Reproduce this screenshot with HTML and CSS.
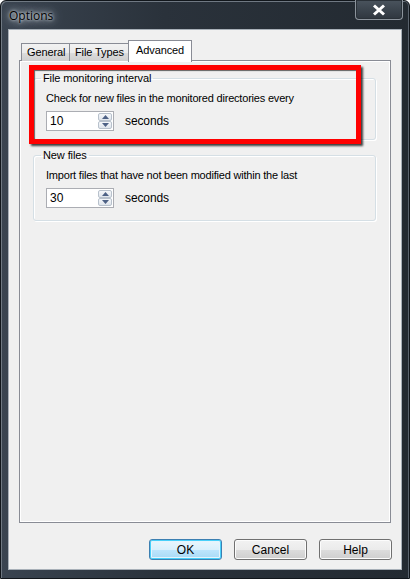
FILE: index.html
```html
<!DOCTYPE html>
<html>
<head>
<meta charset="utf-8">
<link rel="stylesheet" href="styles.css">
</head>
<body>
<div class="window">
  <div class="titlebar">
    <span class="title">Options</span>
    <div class="close">
      <svg width="14" height="12" viewBox="0 0 14 12"><path d="M2 1.5 L12 10.5 M12 1.5 L2 10.5" stroke="#fff" stroke-width="3" fill="none"/></svg>
    </div>
  </div>
  <div class="client">
    <div class="tabs">
      <div class="tab">General</div>
      <div class="tab">File Types</div>
      <div class="tab active">Advanced</div>
    </div>
    <div class="panel">
      <fieldset class="group g1">
        <legend>File monitoring interval</legend>
        <div class="desc">Check for new files in the monitored directories every</div>
        <div class="row">
          <div class="spin">
            <span class="val">10</span>
            <div class="arrows">
              <div class="arr up"><svg width="7" height="4" viewBox="0 0 7 4"><path d="M0 4 L3.5 0 L7 4Z" fill="#4d6185"/></svg></div>
              <div class="arr down"><svg width="7" height="4" viewBox="0 0 7 4"><path d="M0 0 L3.5 4 L7 0Z" fill="#4d6185"/></svg></div>
            </div>
          </div>
          <span class="unit">seconds</span>
        </div>
      </fieldset>
      <fieldset class="group g2">
        <legend>New files</legend>
        <div class="desc">Import files that have not been modified within the last</div>
        <div class="row">
          <div class="spin">
            <span class="val">30</span>
            <div class="arrows">
              <div class="arr up"><svg width="7" height="4" viewBox="0 0 7 4"><path d="M0 4 L3.5 0 L7 4Z" fill="#4d6185"/></svg></div>
              <div class="arr down"><svg width="7" height="4" viewBox="0 0 7 4"><path d="M0 0 L3.5 4 L7 0Z" fill="#4d6185"/></svg></div>
            </div>
          </div>
          <span class="unit">seconds</span>
        </div>
      </fieldset>
      <div class="highlight"></div>
    </div>
    <div class="buttons">
      <div class="btn default">OK</div>
      <div class="btn">Cancel</div>
      <div class="btn">Help</div>
    </div>
  </div>
</div>
</body>
</html>
```

FILE: styles.css
```css
* { box-sizing: border-box; }
html, body { margin: 0; padding: 0; }
body {
  width: 410px; height: 579px; overflow: hidden;
  font-family: "Liberation Sans", Arial, sans-serif;
  font-size: 11px; color: #000;
}
.window {
  width: 410px; height: 579px;
  background: linear-gradient(90deg, #3a4450 0%, #2a323b 40%, #232a31 100%);
  border: 1px solid #11161b;
  border-radius: 6px 6px 0 0;
  display: flex; flex-direction: column;
  padding: 0 7px 8px 7px;
  box-shadow: inset 1px 1px 0 #6f7882, inset -1px 0 0 #5a636d;
}
.titlebar {
  height: 28px; flex: none;
  display: flex; align-items: flex-start; justify-content: space-between;
}
.title {
  font-family: "Open Sans", "DejaVu Sans", sans-serif;
  font-size: 12px; color: #000; margin-top: 6px; margin-left: 1px;
  text-shadow: 0 0 3px #e9eef2, 0 0 7px #cfd8e0, 0 0 12px #aeb8c2;
}
.close {
  width: 48px; height: 20px; margin-top: -1px; margin-right: -1px;
  border: 1px solid #8c949c; border-top: none;
  border-radius: 0 0 4px 4px;
  background: linear-gradient(180deg, #4a545e 0%, #3c454e 50%, #2f373f 100%);
  box-shadow: inset 0 0 0 1px #2a3138;
  display: flex; align-items: center; justify-content: center;
}
.client {
  flex: 1;
  background: #f0f0f0;
  border: 1px solid #a8b0b8;
  padding: 10px 10px 0 10px;
  display: flex; flex-direction: column;
}
.tabs {
  display: flex; align-items: flex-end;
  height: 21px; padding-left: 2px;
  position: relative; z-index: 2; margin-bottom: -1px;
}
.tab {
  height: 18px; padding: 0 0 0 5px;
  border: 1px solid #898c95; border-bottom: none;
  background: linear-gradient(180deg, #f2f2f2 0%, #ebebeb 50%, #dcdcdc 51%, #cfcfcf 100%);
  display: flex; align-items: center;
  margin-right: -1px; white-space: nowrap;
  line-height: 1; font-size: 11px; letter-spacing: -0.1px;
}
.tab:nth-child(1) { width: 49px; }
.tab:nth-child(2) { width: 60px; }
.tab.active {
  height: 22px; width: 64px;
  background: #fff;
  padding: 0 0 3px 7px;
  margin-bottom: -1px;
}
.panel {
  height: 463px;
  border: 1px solid #898c95;
  background: #f0f0f0;
  box-shadow: inset 1px 1px 0 #fff, inset -1px -1px 0 #fff;
  padding: 10px 14px 0 13px;
  position: relative;
  display: flex; flex-direction: column; gap: 8px;
}
.group {
  margin: 0; min-width: 0;
  border: 1px solid #d5dfe5;
  border-radius: 3px;
  box-shadow: inset 1px 1px 0 #fff, 1px 1px 0 #fff;
  padding: 6px 0 0 12px;
}
.g1 { height: 69px; }
.g2 { height: 73px; }
.group legend {
  padding: 0 2px; margin-left: -5px;
  line-height: 14px; font-size: 11px; letter-spacing: -0.1px;
}
.desc { line-height: 14px; font-size: 11px; letter-spacing: -0.2px; }
.row { display: flex; align-items: center; margin-top: 6px; }
.spin {
  width: 68px; height: 20px;
  border: 1px solid #abadb3;
  background: #fff;
  display: flex; align-items: stretch;
}
.val { flex: 1; padding-left: 3px; line-height: 18px; font-size: 12px; }
.arrows {
  width: 15px; display: flex; flex-direction: column; padding: 1px 1px 1px 0;
}
.arr {
  flex: 1;
  border: 1px solid #b8c1cc;
  border-radius: 2px;
  background: linear-gradient(180deg, #f5f7fa, #dfe5ec);
  display: flex; align-items: center; justify-content: center;
}
.unit { margin-left: 11px; font-size: 12px; letter-spacing: -0.1px; }
.highlight {
  position: absolute; left: 9px; top: 4px; width: 332px; height: 79px;
  border: 5px solid #ff0000;
  box-shadow: 2px 2px 2px rgba(0,0,0,0.75), inset 1px 1px 1px rgba(0,0,0,0.6);
  pointer-events: none;
}
.buttons {
  display: flex; justify-content: flex-end; gap: 12px;
  margin-top: 16px; margin-right: -1px;
}
.btn {
  width: 73px; height: 21px;
  border: 1px solid #707070; border-radius: 3px;
  background: linear-gradient(180deg, #f2f2f2 0%, #ebebeb 50%, #dddddd 51%, #cfcfcf 100%);
  box-shadow: inset 0 0 0 1px #fcfcfc;
  display: flex; align-items: center; justify-content: center;
  font-size: 12px;
}
.btn.default {
  border-color: #3c7fb1;
  background: linear-gradient(180deg, #eaf6fd 0%, #d9f0fc 50%, #bee6fd 51%, #a7d9f5 100%);
  box-shadow: inset 0 0 0 1px #48d0fa, inset 0 0 0 2px #e5f4fc;
}
```
